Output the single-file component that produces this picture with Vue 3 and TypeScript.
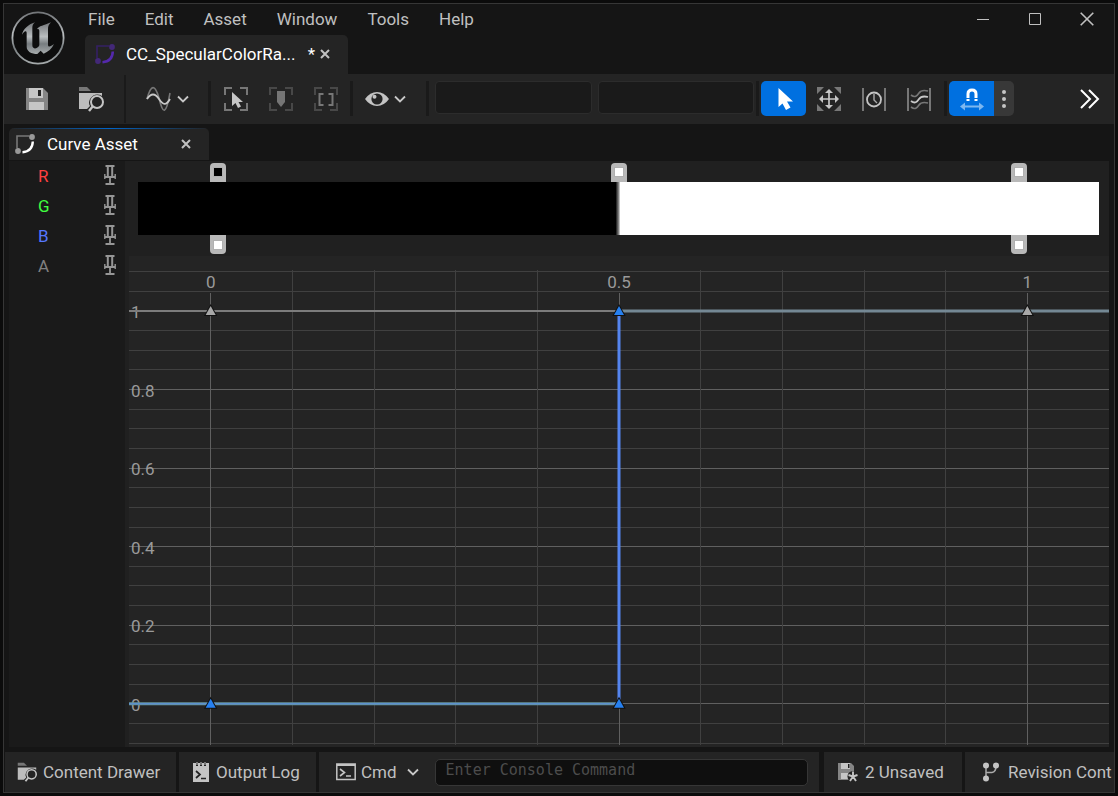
<script setup lang="ts">
import { computed, onBeforeUnmount, onMounted, ref } from 'vue'

interface Channel { name: string; tone: string }
interface Stop { at: number; color: string }
interface Key { x: number; y: number; active: boolean }

const menus: string[] = ['File', 'Edit', 'Asset', 'Window', 'Tools', 'Help']
const channels: Channel[] = [
  { name: 'R', tone: 'red' },
  { name: 'G', tone: 'green' },
  { name: 'B', tone: 'blue' },
  { name: 'A', tone: 'grey' },
]
const colorStops: Stop[] = [
  { at: 0, color: '#000' },
  { at: 0.5, color: '#fff' },
  { at: 1, color: '#fff' },
]
const alphaStops: Stop[] = [
  { at: 0, color: '#fff' },
  { at: 1, color: '#fff' },
]
const keys: Key[] = [
  { x: 0, y: 1, active: false },
  { x: 1, y: 1, active: false },
  { x: 0.5, y: 1, active: true },
  { x: 0, y: 0, active: true },
  { x: 0.5, y: 0, active: true },
]

const command = ref('')
const graph = ref<HTMLElement | null>(null)
const width = ref(980)
const height = ref(491)
let observer: ResizeObserver | undefined

onMounted(() => {
  observer = new ResizeObserver(([entry]) => {
    width.value = Math.round(entry.contentRect.width)
    height.value = Math.round(entry.contentRect.height)
  })
  if (graph.value) observer.observe(graph.value)
})
onBeforeUnmount(() => observer?.disconnect())

// Visible range: time runs from -0.1 to 1.1, value from 1.14 down to -0.11
const px = (t: number): number => ((t + 0.1) / 1.2) * width.value
const py = (v: number): number => ((1.14 - v) / 1.25) * height.value
const crisp = (n: number): number => Math.floor(n) + 0.5

const columns = computed(() =>
  Array.from({ length: 11 }, (_, i) => ({ x: crisp(px(i / 10)), major: i % 5 === 0 })))
const rows = computed(() =>
  Array.from({ length: 25 }, (_, i) => (i - 2) / 20)
    .filter((v) => v <= 1.1)
    .map((v) => ({ y: crisp(py(v)), major: Math.abs((v * 5) % 1) < 0.001 })))
const valueLabels = ['0', '0.2', '0.4', '0.6', '0.8', '1']
const timeLabels = ['0', '0.5', '1']
const stopLeft = (at: number): string => `${(8.34 + at * 83.33).toFixed(2)}%`
</script>

<template>
  <div class="window">
    <header class="titlebar">
      <svg class="logo" viewBox="0 0 54 54" aria-label="Unreal Engine">
        <defs>
          <linearGradient id="steel" x1="0" y1="0" x2="0" y2="1">
            <stop offset="0" stop-color="#737679" />
            <stop offset=".45" stop-color="#b9bdbf" />
            <stop offset=".68" stop-color="#777d80" />
            <stop offset="1" stop-color="#a5aaab" />
          </linearGradient>
        </defs>
        <circle cx="27" cy="27" r="25.6" fill="#0d0d0d" stroke="url(#steel)" stroke-width="1.8" />
        <g transform="translate(-11 -11) scale(.3333)">
          <path fill="url(#steel)" d="M66 104C70 87 84 74 105 67C99 72 97 77 97 84V136C97 145 105 147 110 144C115 141 118 138 118 134V94C118 87 115 86 111 88C116 78 132 76 153 67C146 74 144 79 144 89V134C144 142 151 141 162 132C156 146 144 156 131 161L122 152L112 162C94 162 80 154 80 140V99C80 91 73 92 66 104Z" />
        </g>
      </svg>
      <div class="title-main">
        <nav class="menus" aria-label="Main menu">
          <button v-for="m in menus" :key="m" type="button">{{ m }}</button>
        </nav>
        <div class="doc-tab">
          <svg class="curve-icon" viewBox="0 0 20 20">
            <path d="M2 14V2H14" fill="none" stroke="#352064" stroke-width="1.6" />
            <circle cx="17" cy="3" r="2.9" fill="#432878" /><circle cx="3" cy="17" r="2.9" fill="#432878" />
            <path d="M17.8 7.5Q17.5 17.5 7.5 18.2" fill="none" stroke="#5429ac" stroke-width="2.6" />
          </svg>
          <span class="doc-name">CC_SpecularColorRa...</span>
          <span class="dirty">*</span>
          <button type="button" class="close" aria-label="Close document">
            <svg viewBox="0 0 10 10"><path d="M1 1L9 9M9 1L1 9" /></svg>
          </button>
        </div>
      </div>
      <div class="win-controls">
        <button type="button" aria-label="Minimize"><svg viewBox="0 0 14 14"><path d="M1 7.5H13" /></svg></button>
        <button type="button" aria-label="Maximize"><svg viewBox="0 0 14 14"><path d="M1.5 1.5H12.5V12.5H1.5Z" /></svg></button>
        <button type="button" aria-label="Close window"><svg viewBox="0 0 14 14"><path d="M.7 .7L13.3 13.3M13.3 .7L.7 13.3" stroke-width="1.6" /></svg></button>
      </div>
    </header>

    <div class="toolbar" role="toolbar" aria-label="Curve tools">
      <div class="group files">
        <button type="button" aria-label="Save">
          <svg class="ico24" viewBox="0 0 24 24">
            <path fill="#858585" d="M1 1H18L23 6V23H1Z" /><path fill="#c6c6c6" d="M4 1H18V11H4ZM4 15H19V23H4Z" />
            <path fill="#222" d="M13 3H16V9H13Z" />
          </svg>
        </button>
        <button type="button" aria-label="Browse to asset">
          <svg class="ico26" viewBox="0 0 26 24">
            <path fill="#777" d="M1 0H9L13 4H1Z" /><path fill="#bdbdbd" d="M1 6H24V9Q17 5 12 12Q10 16 12 19L9 22H1Z" />
            <circle cx="19" cy="15" r="6" fill="#242424" stroke="#c6c6c6" stroke-width="2" />
            <path d="M15 19L11 24" stroke="#c6c6c6" stroke-width="2.4" />
          </svg>
        </button>
      </div>
      <div class="group tall">
        <button type="button" class="with-chevron" aria-label="Curve types">
          <svg class="ico26" viewBox="0 0 26 26" fill="none">
            <path d="M1 13C5-2 9-2 13 12C17 29 20 29 24 7" stroke="#777" stroke-width="1.6" />
            <path d="M1 13C5 7 9 7 13 13S20 20 24 13" stroke="#c8c8c8" stroke-width="1.8" />
          </svg>
          <svg class="chevron" viewBox="0 0 12 8"><path d="M1 1.5L6 6.5L11 1.5" /></svg>
        </button>
      </div>
      <div class="group frames">
        <button type="button" aria-label="Zoom to fit">
          <svg class="ico24" viewBox="0 0 24 24">
            <path class="bracket" stroke="#777" d="M1 8V1H8M16 1H23V8M23 16V23H16M8 23H1V16" />
            <path fill="#c6c6c6" d="M8 5V19L11.5 16L14 21L17 19.5L14.5 15H19Z" />
          </svg>
        </button>
        <button type="button" aria-label="Zoom to fit marker">
          <svg class="ico24" viewBox="0 0 24 24">
            <path class="bracket" stroke="#484848" d="M1 8V1H8M16 1H23V8M23 16V23H16M8 23H1V16" />
            <path fill="#757575" d="M8 4H16V15L12 20L8 15Z" />
          </svg>
        </button>
        <button type="button" aria-label="Zoom to fit range">
          <svg class="ico24" viewBox="0 0 24 24">
            <path class="bracket" stroke="#484848" d="M1 8V1H8M16 1H23V8M23 16V23H16M8 23H1V16" />
            <path fill="none" stroke="#777" stroke-width="2" d="M9.5 7H5.5V18H9.5M14.5 7H18.5V18H14.5" />
          </svg>
        </button>
      </div>
      <div class="group eye">
        <button type="button" class="with-chevron" aria-label="View options">
          <svg class="ico24" viewBox="0 0 24 24">
            <path fill="#c4c4c4" d="M0 12Q5 5 12 5T24 12Q19 19 12 19T0 12Z" /><circle cx="12" cy="12" r="5.6" fill="#242424" /><circle cx="9.5" cy="9.8" r="2" fill="#c4c4c4" />
          </svg>
          <svg class="chevron" viewBox="0 0 12 8"><path d="M1 1.5L6 6.5L11 1.5" /></svg>
        </button>
      </div>
      <div class="group fields">
        <input type="text" aria-label="Key time" disabled>
        <input type="text" aria-label="Key value" disabled>
      </div>
      <div class="group modes">
        <button type="button" class="mode on" aria-label="Select" aria-pressed="true">
          <svg class="ico24" viewBox="0 0 24 24"><path fill="#fff" d="M6.5 1V20L10.5 16.5L14 23L18.5 20.5L15 14.5H21Z" /></svg>
        </button>
        <button type="button" class="mode" aria-label="Transform">
          <svg class="ico24" viewBox="0 0 24 24">
            <path fill="#777" d="M0 0H7L0 7ZM24 0V7L17 0ZM0 24V17L7 24ZM24 24H17L24 17Z" />
            <path stroke="#c6c6c6" stroke-width="1.7" d="M12 4V20M4 12H20" />
            <path fill="#c6c6c6" d="M12 2L16 6H8ZM12 22L8 18H16ZM2 12L6 8V16ZM22 12L18 16V8Z" />
          </svg>
        </button>
        <button type="button" class="mode" aria-label="Retime">
          <svg class="ico24" viewBox="0 0 24 24" fill="none">
            <path stroke="#777" stroke-width="2" d="M1 1V24M23 1V24" /><circle cx="12" cy="12.5" r="7" stroke="#c4c4c4" stroke-width="1.8" /><path stroke="#aaa" stroke-width="1.4" d="M12 7V13L15 16" />
          </svg>
        </button>
        <button type="button" class="mode" aria-label="Multi scale">
          <svg class="ico24" viewBox="0 0 24 24" fill="none">
            <path stroke="#777" stroke-width="2" d="M1 1V24M23 1V24" />
            <path stroke="#777" stroke-width="1.6" d="M4 8C8 11 10 9 12 6S17 3 21 4M4 20C8 23 10 21 12 18S17 15 21 16" /><path stroke="#c8c8c8" stroke-width="1.8" d="M4 14C8 17 10 15 12 12S17 9 21 10" />
          </svg>
        </button>
      </div>
      <div class="group snap">
        <button type="button" class="mode on snap-toggle" aria-label="Snap time" aria-pressed="true">
          <svg class="ico24" viewBox="0 0 24 24">
            <path fill="none" stroke="#fff" stroke-width="3" d="M8 14V7Q8 3 12 3T16 7V14" /><path stroke="#0070e0" d="M6 11.5H18" />
            <path fill="#7db7f0" d="M0 19.5L5 15.5V18.5H19V15.5L24 19.5L19 23.5V20.5H5V23.5Z" />
          </svg>
        </button>
        <button type="button" class="dots" aria-label="Snap options">
          <svg viewBox="0 0 4 18" fill="#c4c4c4"><circle cx="2" cy="2" r="2" /><circle cx="2" cy="9" r="2" /><circle cx="2" cy="16" r="2" /></svg>
        </button>
      </div>
      <button type="button" class="more" aria-label="More tools">
        <svg viewBox="0 0 20 20"><path d="M1 1L10 10L1 19M9 1L18 10L9 19" /></svg>
      </button>
    </div>

    <main class="dock">
      <div class="dock-tab">
        <svg class="curve-icon" viewBox="0 0 20 20">
          <path d="M2 14V2H14" fill="none" stroke="#777" stroke-width="1.6" />
          <circle cx="17" cy="3" r="2.9" fill="#999" /><circle cx="3" cy="17" r="2.9" fill="#999" />
          <path d="M17.8 7.5Q17.5 17.5 7.5 18.2" fill="none" stroke="#fff" stroke-width="2.4" />
        </svg>
        <span>Curve Asset</span>
        <button type="button" class="close" aria-label="Close panel">
          <svg viewBox="0 0 10 10"><path d="M1 1L9 9M9 1L1 9" /></svg>
        </button>
      </div>
      <div class="panels">
        <ul class="channels">
          <li v-for="c in channels" :key="c.name">
            <span :class="c.tone">{{ c.name }}</span>
            <button type="button" :aria-label="`Pin ${c.name}`">
              <svg viewBox="0 0 12 20" fill="none" stroke="#969696">
                <path d="M1.5 1H10.5" stroke-width="2" /><path d="M3.8 1V12H8.2V1" stroke-width="2" />
                <path d="M.8 9V14M11.2 9V14" stroke-width="1.4" /><path d="M1 12H11" stroke-width="2" /><path d="M6 13V19M1.5 19H10.5" stroke-width="1.8" />
              </svg>
            </button>
          </li>
        </ul>
        <section class="editor">
          <div class="gradient">
            <div class="bar">
              <span v-for="s in colorStops" :key="`c${s.at}`" class="stop top" :style="{ left: stopLeft(s.at) }"><i :style="{ background: s.color }" /></span>
              <span v-for="s in alphaStops" :key="`a${s.at}`" class="stop bottom" :style="{ left: stopLeft(s.at) }"><i :style="{ background: s.color }" /></span>
            </div>
          </div>
          <div ref="graph" class="graph">
            <svg :viewBox="`0 0 ${width} ${height}`">
              <line v-for="r in rows" :key="`r${r.y}`" x1="0" :x2="width" :y1="r.y" :y2="r.y" :class="r.major ? 'major' : 'minor'" />
              <line v-for="c in columns" :key="`c${c.x}`" :x1="c.x" :x2="c.x" :y1="c.major ? 37 : 14" :y2="height - 2" :class="c.major ? 'major' : 'minor'" />
              <text v-for="t in timeLabels" :key="`t${t}`" :x="px(+t)" y="32" text-anchor="middle">{{ t }}</text>
              <text v-for="v in valueLabels" :key="`v${v}`" x="2" :y="py(+v) + 7">{{ v }}</text>
              <line x1="0" :x2="px(0.5)" :y1="py(1)" :y2="py(1)" class="alpha" />
              <line :x1="px(0.5)" :x2="width" :y1="py(1)" :y2="py(1)" class="merged" />
              <line x1="0" :x2="px(0.5)" :y1="py(0)" :y2="py(0)" class="edge" />
              <line x1="0" :x2="px(0.5)" :y1="py(0)" :y2="py(0)" class="core" />
              <line :x1="px(0.5)" :x2="px(0.5)" :y1="py(1)" :y2="py(0)" class="step" />
              <path v-for="(k, i) in keys" :key="`k${i}`" :transform="`translate(${px(k.x)} ${py(k.y)})`" d="M0-5L5 4H-5Z" :class="k.active ? 'key active' : 'key'" />
            </svg>
          </div>
        </section>
      </div>
    </main>

    <footer class="status">
      <button type="button" class="cell drawer">
        <svg class="ico20" viewBox="0 0 26 24">
          <path fill="#777" d="M1 0H9L13 4H1Z" /><path fill="#bdbdbd" d="M1 6H25V9Q17 5 12 12Q10 16 12 19L9 22H1Z" />
          <circle cx="19" cy="15" r="6" fill="#242424" stroke="#c6c6c6" stroke-width="2" /><path d="M15 19L11 24" stroke="#c6c6c6" stroke-width="2.4" />
        </svg>
        Content Drawer
      </button>
      <button type="button" class="cell log">
        <svg class="ico-log" viewBox="0 0 16 20">
          <path fill="#c4c4c4" d="M0 1H3V4H5V1H7V4H9V1H11V4H13V1H16V20H0Z" /><path fill="#777" d="M3 0H5V3H3ZM7 0H9V3H7ZM11 0H13V3H11Z" />
          <path fill="none" stroke="#222" stroke-width="1.7" d="M3 9L7 12.5L3 16M8 16.5H13" />
        </svg>
        Output Log
      </button>
      <div class="cell console">
        <button type="button" class="cmd">
          <svg class="ico20" viewBox="0 0 20 18" fill="none" stroke="#c4c4c4"><path d="M.8 1H19.2V16.5H.8Z" stroke-width="1.5" /><path d="M1 2H19" stroke-width="2" /><path d="M4 6L8.5 9.5L4 13M10 13H15" stroke-width="1.6" /></svg>
          Cmd
          <svg class="chevron" viewBox="0 0 12 8"><path d="M1 1.5L6 6.5L11 1.5" /></svg>
        </button>
        <input v-model="command" type="text" aria-label="Console command" placeholder="Enter Console Command">
      </div>
      <button type="button" class="cell unsaved">
        <svg class="ico20" viewBox="0 0 20 20">
          <path fill="#858585" d="M0 1H13L16 4V18H0Z" /><path fill="#c6c6c6" d="M3 1H12V7H3ZM3 11H10V17H3Z" /><path fill="#222" d="M10 2H11.5V6H10Z" />
          <circle cx="15" cy="14.5" r="5.5" fill="#242424" /><path stroke="#c6c6c6" stroke-width="1.9" d="M15 14.5V9.5M15 14.5L19.5 13M15 14.5L18 19M15 14.5L12 19M15 14.5L10.5 13" />
        </svg>
        2 Unsaved
      </button>
      <button type="button" class="cell revision">
        <svg class="ico-branch" viewBox="0 0 16 20">
          <path fill="none" stroke="#aaa" stroke-width="1.5" d="M3 3V17M3 10.5H9Q13 10 13 4" /><g fill="#c4c4c4"><circle cx="3" cy="3.5" r="3" /><circle cx="13" cy="3.5" r="3" /><circle cx="3" cy="16.5" r="3" /></g>
        </svg>
        Revision Cont
      </button>
    </footer>
  </div>
</template>

<style>
html, body, #app { height: 100%; }
body { margin: 0; background: #0b0b0b; }
#app { box-sizing: border-box; padding: 3px; }
</style>

<style scoped>
* { box-sizing: border-box; }
.window {
  height: 100%;
  display: flex;
  flex-direction: column;
  border: 1px solid #363636;
  background: #151515;
  color: #c0c0c0;
  font: 17px/20px Roboto, "Noto Sans", sans-serif;
  overflow: hidden;
}
button { padding: 0; border: 0; background: none; color: inherit; font: inherit; }
svg { display: block; flex: none; }
.titlebar { display: flex; height: 70px; flex: none; align-items: flex-start; }
.logo { width: 54px; height: 54px; margin: 7px 20px 0 7px; }
.title-main { flex: 1; min-width: 0; }
.menus { display: flex; gap: 30px; padding: 5px 3px 6px; }
.doc-tab {
  display: flex; align-items: center; width: 263px; height: 39px; padding: 0 18px 2px 10px;
  background: #242424; border-radius: 5px 5px 0 0; color: #fff;
}
.curve-icon { width: 20px; height: 20px; }
.doc-name { flex: 1; margin-left: 11px; white-space: nowrap; }
.dirty { margin-right: 5px; }
.close svg { width: 10px; height: 10px; fill: none; stroke: #c0c0c0; stroke-width: 2; }
.win-controls { display: flex; gap: 38px; padding: 8px 20px; }
.win-controls svg { width: 14px; height: 14px; fill: none; stroke: #c0c0c0; stroke-width: 1; }

.toolbar { display: flex; align-items: center; flex: none; height: 50px; padding-bottom: 1px; background: #242424; }
.ico24 { width: 24px; height: 24px; }
.ico26 { width: 26px; height: 26px; }
.chevron { width: 12px; height: 8px; fill: none; stroke: #c8c8c8; stroke-width: 1.8; }
.bracket { fill: none; stroke-width: 2; }
.group { display: flex; align-items: center; height: 35px; }
.group + .group { border-left: 3px solid #1a1a1a; }
.files { gap: 29px; width: 120px; padding-left: 21px; }
.group.tall { width: 84px; height: 48px; padding-left: 20px; border-left-width: 2px; }
.with-chevron { display: flex; align-items: center; gap: 5px; }
.frames { gap: 21px; width: 142px; padding-left: 13px; }
.eye { width: 76px; padding-left: 12px; }
.fields { flex: 0 1 330px; gap: 6px; padding: 0 2px 2px 6px; min-width: 0; }
.fields input {
  flex: 1; min-width: 0; height: 33px; border: 1px solid #2c2c2c; border-radius: 4px; background: #1a1a1a;
}
.modes { width: 188px; padding-left: 2px; }
.mode { display: grid; place-items: center; width: 45px; height: 35px; border-radius: 5px; }
.on { background: #0070e0; }
.snap { padding-left: 2px; }
.snap-toggle { border-radius: 5px 0 0 5px; }
.dots { display: grid; place-items: center; width: 20px; height: 35px; background: #383838; border-radius: 0 5px 5px 0; }
.dots svg { width: 4px; height: 18px; }
.more { margin: 0 14px 0 auto; }
.more svg { width: 20px; height: 20px; fill: none; stroke: #fff; stroke-width: 2; }

.dock { flex: 1; min-height: 0; display: flex; flex-direction: column; padding: 4px 5px 5px; }
.dock-tab {
  display: flex; align-items: center; width: 200px; height: 32px; padding: 0 18px 1px 6px;
  background: linear-gradient(90deg, #242424, #0064c8 50%, #242424) top / 100% 1px no-repeat #242424;
  border-radius: 5px 5px 0 0; color: #fff;
}
.dock-tab span { flex: 1; margin-left: 12px; }
.panels { flex: 1; min-height: 0; margin-top: 1px; display: flex; background: #202020; gap: 4px; }
.channels { flex: none; width: 116px; margin: 0; padding: 0; list-style: none; background: #1a1a1a; }
.channels li { display: flex; align-items: center; justify-content: space-between; height: 30px; padding: 0 9px 0 29px; }
.channels button { padding-bottom: 2px; }
.channels svg { width: 12px; height: 20px; }
.red { color: #ff4040; }
.green { color: #40ff40; }
.blue { color: #5577ff; }
.grey { color: #808080; }
.editor { flex: 1; min-width: 0; display: flex; flex-direction: column; }
.gradient { flex: none; padding: 21px 10px 21px 9px; }
.bar {
  position: relative; height: 53px;
  background: linear-gradient(90deg, #000 calc(50% - 3px), #808080 50%, #fff calc(50% + 2px));
}
.stop { position: absolute; width: 16px; height: 19px; margin-left: -8px; background: #b8b8b8; }
.stop i { display: block; width: 10px; height: 10px; border: 1px solid #b0b0b0; }
.top { bottom: 100%; padding: 4px 3px; border-radius: 4px 4px 0 0; }
.bottom { top: 100%; padding: 5px 3px; border-radius: 0 0 4px 4px; }
.graph { flex: 1; min-height: 0; background: #242424; overflow: hidden; }
.graph svg { width: 100%; height: 100%; }
.minor { stroke: #404040; }
.major { stroke: #606060; }
.graph text { fill: #9a9a9a; }
.alpha { stroke: #7c7c7c; stroke-width: 2; }
.merged { stroke: #748894; stroke-width: 3; }
.edge { stroke: #64949c; stroke-width: 3; }
.core { stroke: #5b8ee4; stroke-width: 1; }
.step { stroke: #5585ef; stroke-width: 3; }
.key { fill: #a8a8a8; stroke: #111; stroke-width: 2; paint-order: stroke; }
.active { fill: #2680f0; }

.status { flex: none; display: flex; gap: 3px; height: 40px; padding-left: 1px; }
.cell { display: flex; align-items: center; flex: none; background: #242424; white-space: nowrap; }
.ico20 { width: 20px; height: 20px; }
.drawer { gap: 6px; width: 171px; padding-left: 12px; }
.log { gap: 7px; width: 137px; padding-left: 14px; }
.ico-log { width: 16px; height: 20px; }
.console { flex: 1; min-width: 0; padding: 0 11px 0 17px; gap: 16px; margin-right: 2px; }
.cmd { display: flex; align-items: center; gap: 5px; }
.cmd .chevron { margin-left: 5px; }
.console input {
  flex: 1; min-width: 0; height: 27px; padding: 0 10px 4px; border: 1px solid #363636; border-radius: 5px;
  background: #0f0f0f; color: #c0c0c0; font: 15px/20px "DejaVu Sans Mono", monospace;
}
.console input::placeholder { color: #4c4c4c; opacity: 1; }
.unsaved { gap: 7px; width: 138px; padding-left: 14px; }
.revision { gap: 9px; width: 149px; padding-left: 18px; }
.ico-branch { width: 16px; height: 20px; }
</style>
